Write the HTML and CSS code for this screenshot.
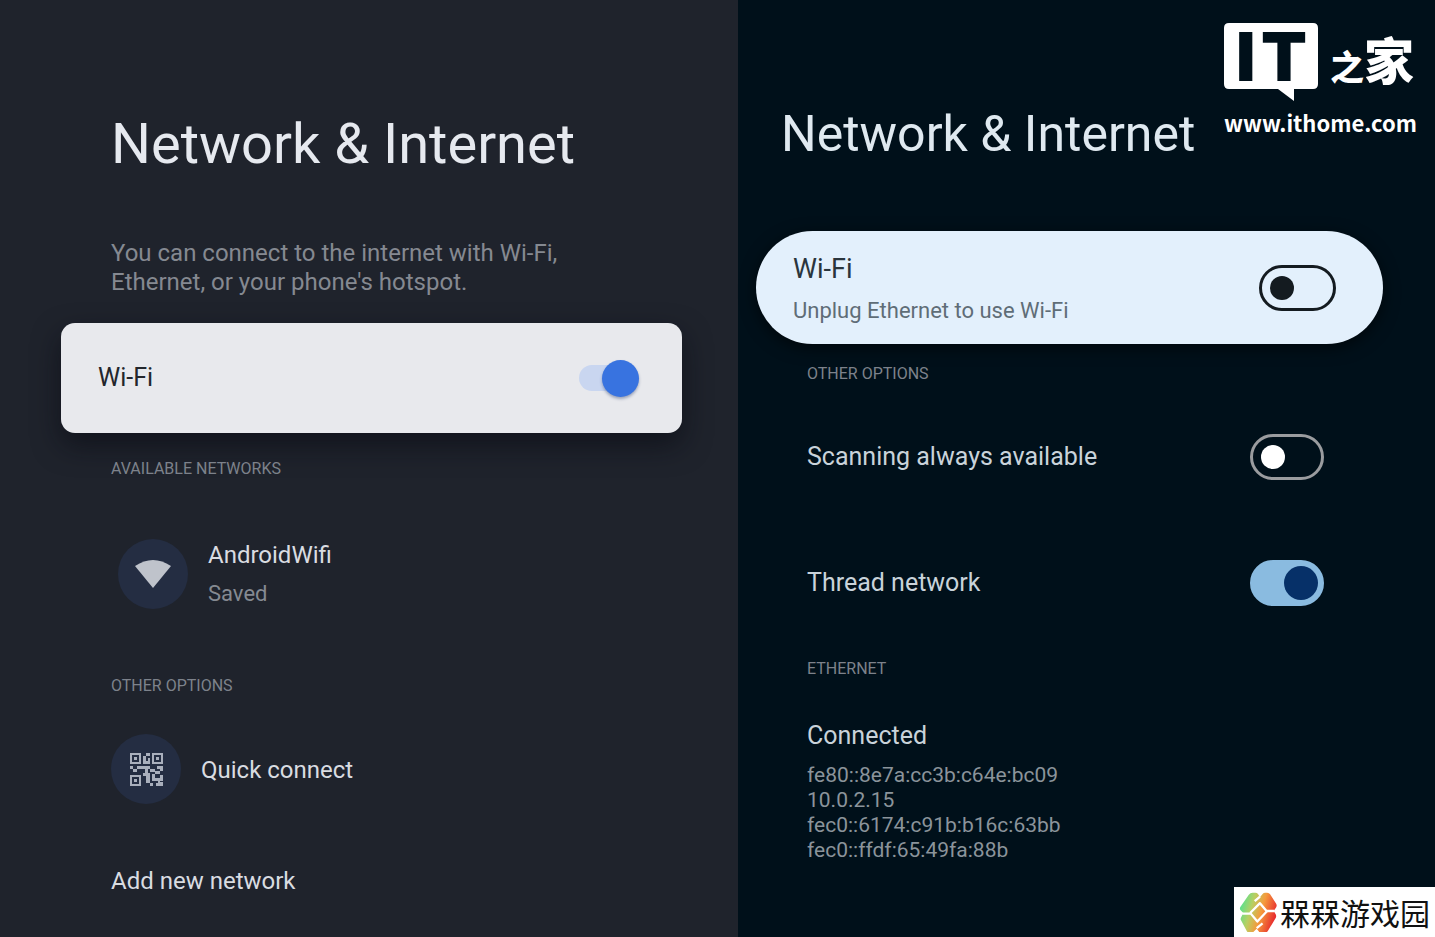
FILE: index.html
```html
<!DOCTYPE html>
<html lang="en">
<head>
    <meta charset="UTF-8">
    <meta name="viewport" content="width=device-width, initial-scale=1.0">
    <title>Network &amp; Internet</title>
    <link rel="stylesheet" href="styles.css">
</head>
<body>
    <main class="compare">
        <section class="panel old">
            <h1>Network &amp; Internet</h1>
            <p class="intro">You can connect to the internet with Wi-Fi, Ethernet, or your phone's hotspot.</p>

            <label class="card">
                <span>Wi-Fi</span>
                <input type="checkbox" class="slider" checked>
            </label>

            <h2>Available networks</h2>
            <button class="network wifi">
                <span class="circle">
                    <svg width="36" height="28" viewBox="0 0 36 28">
                        <path d="M0 6Q18-6 36 6L18 28Z" fill="#bfc3cb"/>
                    </svg>
                </span>
                <span class="network-text">
                    <span>AndroidWifi</span>
                    <small>Saved</small>
                </span>
            </button>

            <h2>Other options</h2>
            <button class="network">
                <span class="circle">
                    <svg width="33" height="33" viewBox="0 0 33 33">
                        <g fill="none" stroke="#a9afbc" stroke-width="2">
                            <rect x="1" y="1" width="9" height="9"/>
                            <rect x="23" y="1" width="9" height="9"/>
                            <rect x="1" y="23" width="9" height="9"/>
                        </g>
                        <path fill="#a9afbc" d="M4 4h3v3H4zM26 4h3v3h-3zM4 26h3v3H4zM16 0h4v3h-4zM13 3h3v5h4v3h-7zM18 5h2v3h-2zM0 13h3v3H0zM3 16h4v3H3zM7 13h13v3h-2v4h-3v-4H7zM20 16h5v3h-5zM25 18h5v3h-5zM27 13h3v3h-3zM30 13h3v5h-3zM13 20h7v3h-7zM16 23h4v7h-4zM20 30h3v3h-3zM22 21h3v4h5v-3h3v6h-3v2h-2v-2h-6zM30 29h3v4h-7v-3h4z"/>
                    </svg>
                </span>
                <span class="network-text">Quick connect</span>
            </button>
            <button class="add">Add new network</button>
        </section>

        <section class="panel new">
            <h1>Network &amp; Internet</h1>

            <label class="card">
                <span class="card-text">
                    <span>Wi-Fi</span>
                    <small>Unplug Ethernet to use Wi-Fi</small>
                </span>
                <input type="checkbox" class="switch dark">
            </label>

            <h2>Other options</h2>
            <label class="option">
                <span>Scanning always available</span>
                <input type="checkbox" class="switch">
            </label>
            <label class="option">
                <span>Thread network</span>
                <input type="checkbox" class="switch" checked>
            </label>

            <h2>Ethernet</h2>
            <h3>Connected</h3>
            <ul class="addresses">
                <li>fe80::8e7a:cc3b:c64e:bc09</li>
                <li>10.0.2.15</li>
                <li>fec0::6174:c91b:b16c:63bb</li>
                <li>fec0::ffdf:65:49fa:88b</li>
            </ul>
        </section>
    </main>

    <div class="ithome">
        <div class="ithome-logo">
            <svg class="bubble" width="94" height="78" viewBox="0 0 94 78">
                <path d="M5 0h84q5 0 5 5v56q0 5-5 5H70v12L54 66H5q-5 0-5-5V5q0-5 5-5z" fill="#fff"/>
                <text x="12" y="58" class="it">I<tspan x="37">T</tspan></text>
            </svg>
            <span class="brush"><span class="zhi">之</span>家</span>
        </div>
        <span>www.ithome.com</span>
    </div>

    <div class="gamesite">
        <svg width="38" height="40" viewBox="20 18 116 122">
            <defs>
                <linearGradient id="rainbow" gradientUnits="userSpaceOnUse" x1="26" y1="60" x2="130" y2="90">
                    <stop offset="0" stop-color="#5fe08c"/>
                    <stop offset="0.3" stop-color="#b9cf62"/>
                    <stop offset="0.6" stop-color="#f59a3c"/>
                    <stop offset="1" stop-color="#e8302f"/>
                </linearGradient>
            </defs>
            <path d="M24 64L50 26q4-6 12-6h8q5 0 8 4l6 10 8-10q3-4 8-4h6q6 0 9 5l18 28q4 6 0 12l-7 11 6 10q3 6 0 11l-24 40q-4 6-11 6H88q-5 0-8-5l-6-8-8 8q-4 5-9 5h-4q-6 0-9-5L27 106q-4-6 0-12l6-12-8-8q-4-5-1-10z" fill="url(#rainbow)"/>
            <g fill="none" stroke="#fff" stroke-width="7" stroke-linejoin="round">
                <path d="M128 76L104 76 84 52 54 82"/>
                <path d="M30 84L56 84 76 108 106 76"/>
                <path d="M84 32L68 46M74 128L92 114"/>
            </g>
        </svg>
        <span>槑槑游戏园</span>
    </div>
</body>
</html>
```
FILE: styles.css
```css
* {
    box-sizing: border-box;
}
body {
    margin: 0;
    font-family: Roboto, sans-serif;
    background-color: #00101a;
    position: relative;
}
h1, h2, h3, p, ul {
    margin: 0;
    padding: 0;
    font-weight: 400;
}
button {
    background: none;
    border: none;
    padding: 0;
    font: inherit;
    color: inherit;
    text-align: left;
    cursor: pointer;
}
small {
    color: #858a92;
}
.compare {
    display: grid;
    grid-template-columns: 738fr 697fr;
    min-height: 100vh;
}
.panel {
    display: flex;
    flex-direction: column;
    font-size: 25px;
    line-height: 30px;
}
.panel h2 {
    font-size: 16px;
    line-height: 20px;
    text-transform: uppercase;
    color: #7d828b;
}
.card {
    display: flex;
    align-items: center;
    justify-content: space-between;
}
input {
    appearance: none;
    margin: 0;
    flex: none;
    cursor: pointer;
}
input::before {
    content: "";
    display: block;
    border-radius: 50%;
}

/* left panel */
.old {
    background-color: #1f232c;
    color: #d9dce1;
    padding: 106px 56px 40px 111px;
    font-size: 24px;
}
.old h1 {
    font-size: 56px;
    line-height: 76px;
    color: #e6e9ef;
}
.intro {
    margin-top: 57px;
    max-width: 480px;
    font-size: 24px;
    line-height: 29px;
    color: #858991;
}
.old .card {
    margin: 26px 0 26px -50px;
    height: 110px;
    padding: 0 43px 0 37px;
    border-radius: 14px;
    background-color: #e8e9ed;
    color: #23262c;
    font-size: 25px;
    box-shadow: 0 12px 28px rgba(8, 10, 18, 0.6);
}
.slider {
    width: 60px;
    height: 37px;
    display: flex;
    align-items: center;
    justify-content: flex-end;
    position: relative;
}
.slider::after {
    content: "";
    position: absolute;
    left: 0;
    width: 48px;
    height: 26px;
    border-radius: 13px;
    background-color: #c9d6f0;
}
.slider::before {
    width: 37px;
    height: 37px;
    background-color: #3873e0;
    box-shadow: 0 2px 3px rgba(40, 60, 110, 0.4);
    position: relative;
    z-index: 1;
}
.network {
    display: flex;
    align-items: center;
    gap: 20px;
    margin-top: 38px;
}
.network.wifi {
    margin: 59px 0 67px 7px;
}
.circle {
    width: 70px;
    height: 70px;
    border-radius: 50%;
    background-color: #242d42;
    display: flex;
    align-items: center;
    justify-content: center;
}
.network-text {
    display: flex;
    flex-direction: column;
    gap: 9px;
    padding-top: 2px;
}
.network small {
    font-size: 22px;
}
.add {
    margin-top: 62px;
}

/* right panel */
.new {
    background-color: #00101a;
    color: #c9d3da;
    padding: 102px 52px 40px 69px;
}
.new h1 {
    margin-left: -26px;
    font-size: 50px;
    line-height: 64px;
    color: #dfe9f0;
}
.new .card {
    margin: 65px 0 20px -51px;
    height: 113px;
    padding: 0 47px 0 37px;
    border-radius: 57px;
    background-color: #e3f0fc;
    color: #2a353d;
    font-size: 27px;
    box-shadow: 0 4px 16px rgba(0, 0, 0, 0.6);
}
.card-text {
    display: flex;
    flex-direction: column;
    gap: 12px;
    padding-top: 4px;
}
.card-text small {
    font-size: 22px;
    color: #5f6d77;
}
.switch {
    width: 74px;
    height: 46px;
    padding: 0 8px;
    display: flex;
    align-items: center;
    border: 3px solid #9a9c9f;
    border-radius: 23px;
}
.switch::before {
    width: 24px;
    height: 24px;
    background-color: #fff;
}
.switch.dark {
    width: 77px;
    border-color: #141b20;
}
.switch.dark::before {
    background-color: #141b20;
}
.switch:checked {
    justify-content: flex-end;
    padding: 0 3px;
    border-color: #8abbe0;
    background-color: #8abbe0;
}
.switch:checked::before {
    width: 34px;
    height: 34px;
    background-color: #063068;
}
.option {
    display: flex;
    align-items: center;
    justify-content: space-between;
    margin-top: 80px;
    padding-right: 59px;
}
h2 + .option {
    margin-top: 50px;
}
.option + h2 {
    margin-top: 53px;
}
.new h3 {
    margin-top: 42px;
    font-size: 25px;
}
.addresses {
    margin-top: 12px;
    list-style: none;
    font-size: 21px;
    line-height: 25px;
    color: #8b949b;
}

/* site marks over the corners */
.ithome {
    position: absolute;
    top: 23px;
    right: 18px;
    color: #fff;
    font: 700 22px/24px "Noto Sans CJK SC", sans-serif;
}
.ithome-logo {
    display: flex;
    gap: 12px;
    height: 87px;
}
.bubble {
    overflow: visible;
}
.it {
    font: 900 67px Inter, sans-serif;
    fill: #00101a;
}
.brush {
    font-size: 50px;
    font-weight: 900;
    line-height: 70px;
}
.zhi {
    font-size: 34px;
}
.gamesite {
    position: absolute;
    right: 0;
    bottom: 0;
    height: 50px;
    padding: 0 5px;
    display: flex;
    align-items: center;
    gap: 3px;
    background-color: #fff;
    color: #111;
    font: 30px/50px "Noto Sans CJK SC", sans-serif;
}
```
